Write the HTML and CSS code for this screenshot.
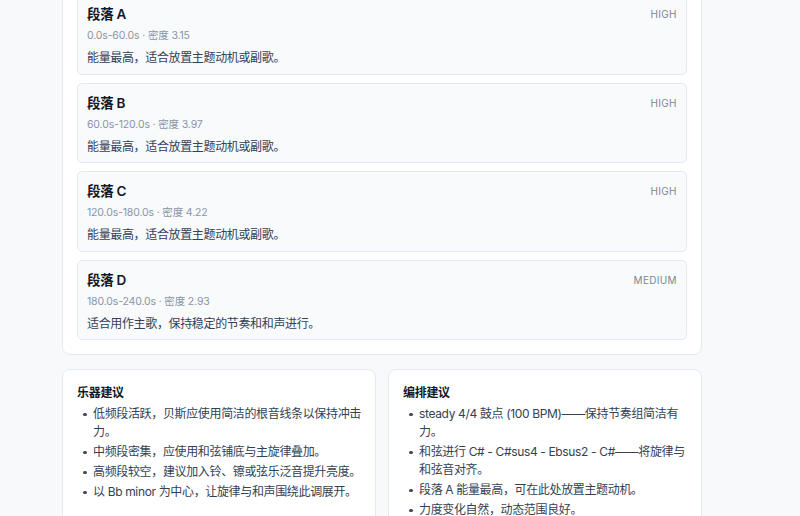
FILE: index.html
```html
<!DOCTYPE html>
<html lang="zh-CN">
<head>
<meta charset="utf-8">
<title>段落分析</title>
<link rel="stylesheet" href="styles.css">
</head>
<body>
<main class="page">
  <section class="panel">
    <div class="section-list">
      <article class="section-card">
        <div class="section-head">
          <h3 class="section-title">段落 A</h3>
          <span class="energy">HIGH</span>
        </div>
        <p class="section-meta">0.0s-60.0s · 密度 3.15</p>
        <p class="section-desc">能量最高，适合放置主题动机或副歌。</p>
      </article>
      <article class="section-card">
        <div class="section-head">
          <h3 class="section-title">段落 B</h3>
          <span class="energy">HIGH</span>
        </div>
        <p class="section-meta">60.0s-120.0s · 密度 3.97</p>
        <p class="section-desc">能量最高，适合放置主题动机或副歌。</p>
      </article>
      <article class="section-card">
        <div class="section-head">
          <h3 class="section-title">段落 C</h3>
          <span class="energy">HIGH</span>
        </div>
        <p class="section-meta">120.0s-180.0s · 密度 4.22</p>
        <p class="section-desc">能量最高，适合放置主题动机或副歌。</p>
      </article>
      <article class="section-card">
        <div class="section-head">
          <h3 class="section-title">段落 D</h3>
          <span class="energy">MEDIUM</span>
        </div>
        <p class="section-meta">180.0s-240.0s · 密度 2.93</p>
        <p class="section-desc">适合用作主歌，保持稳定的节奏和和声进行。</p>
      </article>
    </div>
  </section>

  <div class="tips">
    <section class="tip-card">
      <h4 class="tip-title">乐器建议</h4>
      <ul class="tip-list">
        <li>低频段活跃，贝斯应使用简洁的根音线条以保持冲击力。</li>
        <li>中频段密集，应使用和弦铺底与主旋律叠加。</li>
        <li>高频段较空，建议加入铃、镲或弦乐泛音提升亮度。</li>
        <li>以 Bb minor 为中心，让旋律与和声围绕此调展开。</li>
      </ul>
    </section>
    <section class="tip-card">
      <h4 class="tip-title">编排建议</h4>
      <ul class="tip-list">
        <li>steady 4/4 鼓点 (100 BPM)——保持节奏组简洁有力。</li>
        <li>和弦进行 C# - C#sus4 - Ebsus2 - C#——将旋律与和弦音对齐。</li>
        <li>段落 A 能量最高，可在此处放置主题动机。</li>
        <li>力度变化自然，动态范围良好。</li>
      </ul>
    </section>
  </div>
</main>
</body>
</html>
```

FILE: styles.css
```css
* {
  box-sizing: border-box;
}

html, body {
  margin: 0;
  padding: 0;
  background: #f7f9fb;
}

body {
  font-family: "Inter", "Noto Sans CJK SC", sans-serif;
  color: #1f2937;
  overflow: hidden;
}

/* page column, scrolled so the section list starts mid-panel */
.page {
  width: 640px;
  margin: -21px 0 0 62px;
}

.panel {
  background: #ffffff;
  border: 1px solid #e4e9f0;
  border-radius: 8px;
  padding: 14px;
}

.section-list {
  display: flex;
  flex-direction: column;
  gap: 8px;
}

.section-card {
  background: #f8fafc;
  border: 1px solid #e4e9f0;
  border-radius: 5px;
  padding: 9px 10px 7px 9px;
  height: 80.5px;
}

.section-head {
  display: flex;
  justify-content: space-between;
  align-items: flex-start;
}

.section-title {
  margin: 0;
  font-size: 13.5px;
  line-height: 20px;
  font-weight: 600;
  letter-spacing: -0.3px;
  color: #111827;
}

.energy {
  font-size: 10px;
  line-height: 20px;
  letter-spacing: 0.3px;
  margin-right: -0.8px;
  color: #7b879a;
}

.section-meta {
  margin: 4px 0 0;
  font-size: 10.5px;
  line-height: 16px;
  letter-spacing: -0.15px;
  color: #8a95a6;
}

.section-desc {
  margin: 5px 0 0;
  font-size: 12px;
  line-height: 18px;
  letter-spacing: -0.35px;
  color: #334155;
}

.tips {
  display: grid;
  grid-template-columns: 1fr 1fr;
  gap: 12px;
  margin-top: 14px;
}

.tip-card {
  background: #ffffff;
  border: 1px solid #e4e9f0;
  border-radius: 8px;
  padding: 15px 14px 20px;
}

.tip-title {
  margin: 0;
  font-size: 12px;
  line-height: 16px;
  font-weight: 700;
  letter-spacing: -0.3px;
  color: #111827;
}

.tip-list {
  margin: 4px 0 0;
  padding-left: 16px;
  list-style: none;
  font-size: 12px;
  line-height: 18px;
  letter-spacing: -0.35px;
  color: #334155;
}

.tip-list li {
  position: relative;
  margin-bottom: 2px;
}

/* small round bullet hanging left of each item */
.tip-list li::before {
  content: "";
  position: absolute;
  left: -10px;
  top: 7.5px;
  width: 3.5px;
  height: 3.5px;
  border-radius: 50%;
  background: #3f4a5c;
}
```
